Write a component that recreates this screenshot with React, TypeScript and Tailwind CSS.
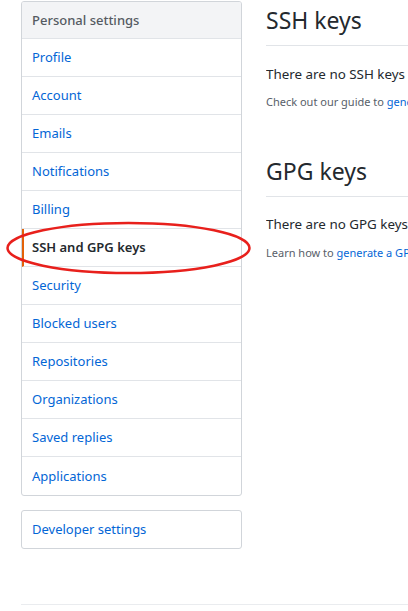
import React from "react";

const items = [
  "Profile",
  "Account",
  "Emails",
  "Notifications",
  "Billing",
  "SSH and GPG keys",
  "Security",
  "Blocked users",
  "Repositories",
  "Organizations",
  "Saved replies",
  "Applications",
];

export default function App() {
  return (
    <div
      className="relative w-[408px] h-[611px] overflow-hidden bg-white text-[#24292e]"
      style={{ fontFamily: '"Noto Sans", "Open Sans", Arial, sans-serif' }}
    >
      <div className="flex pl-[21px] pt-[1px]">
        <div className="w-[221px] shrink-0">
          <nav className="border border-[#d1d5da] rounded-[3px] overflow-hidden">
            <div className="h-[37px] flex items-center pt-[1px] px-[10px] bg-[#f3f4f6] border-b border-[#e1e4e8] text-[13px] font-medium text-[#555b62]">
              Personal settings
            </div>
            {items.map((it, i) => {
              const active = it === "SSH and GPG keys";
              return (
                <div
                  key={it}
                  className={
                    "h-[38px] flex items-center pt-[1px] px-[10px] text-[13px] " +
                    (i < items.length - 1 ? "border-b border-[#e1e4e8] " : "h-[37px] ") +
                    (active
                      ? "font-semibold text-[#24292e] border-l-2 border-l-[#e36209] pl-[8px]"
                      : "text-[#0366d6]")
                  }
                >
                  {it}
                </div>
              );
            })}
          </nav>
          <nav className="mt-[14px] border border-[#d1d5da] rounded-[3px]">
            <div className="h-[37px] flex items-center pt-[1px] px-[10px] text-[13px] text-[#0366d6]">
              Developer settings
            </div>
          </nav>
        </div>
        <main className="ml-[24px] flex-1 min-w-0 overflow-hidden whitespace-nowrap">
          <div className="pt-[1px] pb-[7px] border-b border-[#e1e4e8]">
            <h2 className="text-[23px] leading-[36px] font-normal">SSH keys</h2>
          </div>
          <p className="mt-[18px] text-[13.4px] leading-[20px]">
            There are no SSH keys associated with your account.
          </p>
          <p className="mt-[9px] text-[11px] leading-[18px] text-[#586069]">
            Check out our guide to{" "}
            <span className="text-[#0366d6]">generating SSH keys</span> or troubleshoot{" "}
            <span className="text-[#0366d6]">common SSH Problems</span>.
          </p>
          <div className="mt-[42px] pb-[7px] border-b border-[#e1e4e8]">
            <h2 className="text-[23px] leading-[36px] font-normal">GPG keys</h2>
          </div>
          <p className="mt-[17px] text-[13.4px] leading-[20px]">
            There are no GPG keys associated with your account.
          </p>
          <p className="mt-[10px] text-[11px] leading-[18px] text-[#586069]">
            Learn how to{" "}
            <span className="text-[#0366d6]">generate a GPG key and add it to your account</span>.
          </p>
        </main>
      </div>
      <div className="absolute left-[21px] right-0 top-[604px] border-t border-[#eaecef]" />
      <svg
        className="absolute left-0 top-0 pointer-events-none"
        width="408"
        height="611"
      >
        <ellipse
          cx="128.5"
          cy="248"
          rx="121"
          ry="25"
          fill="none"
          stroke="#e8201c"
          strokeWidth="2.5"
        />
      </svg>
    </div>
  );
}
